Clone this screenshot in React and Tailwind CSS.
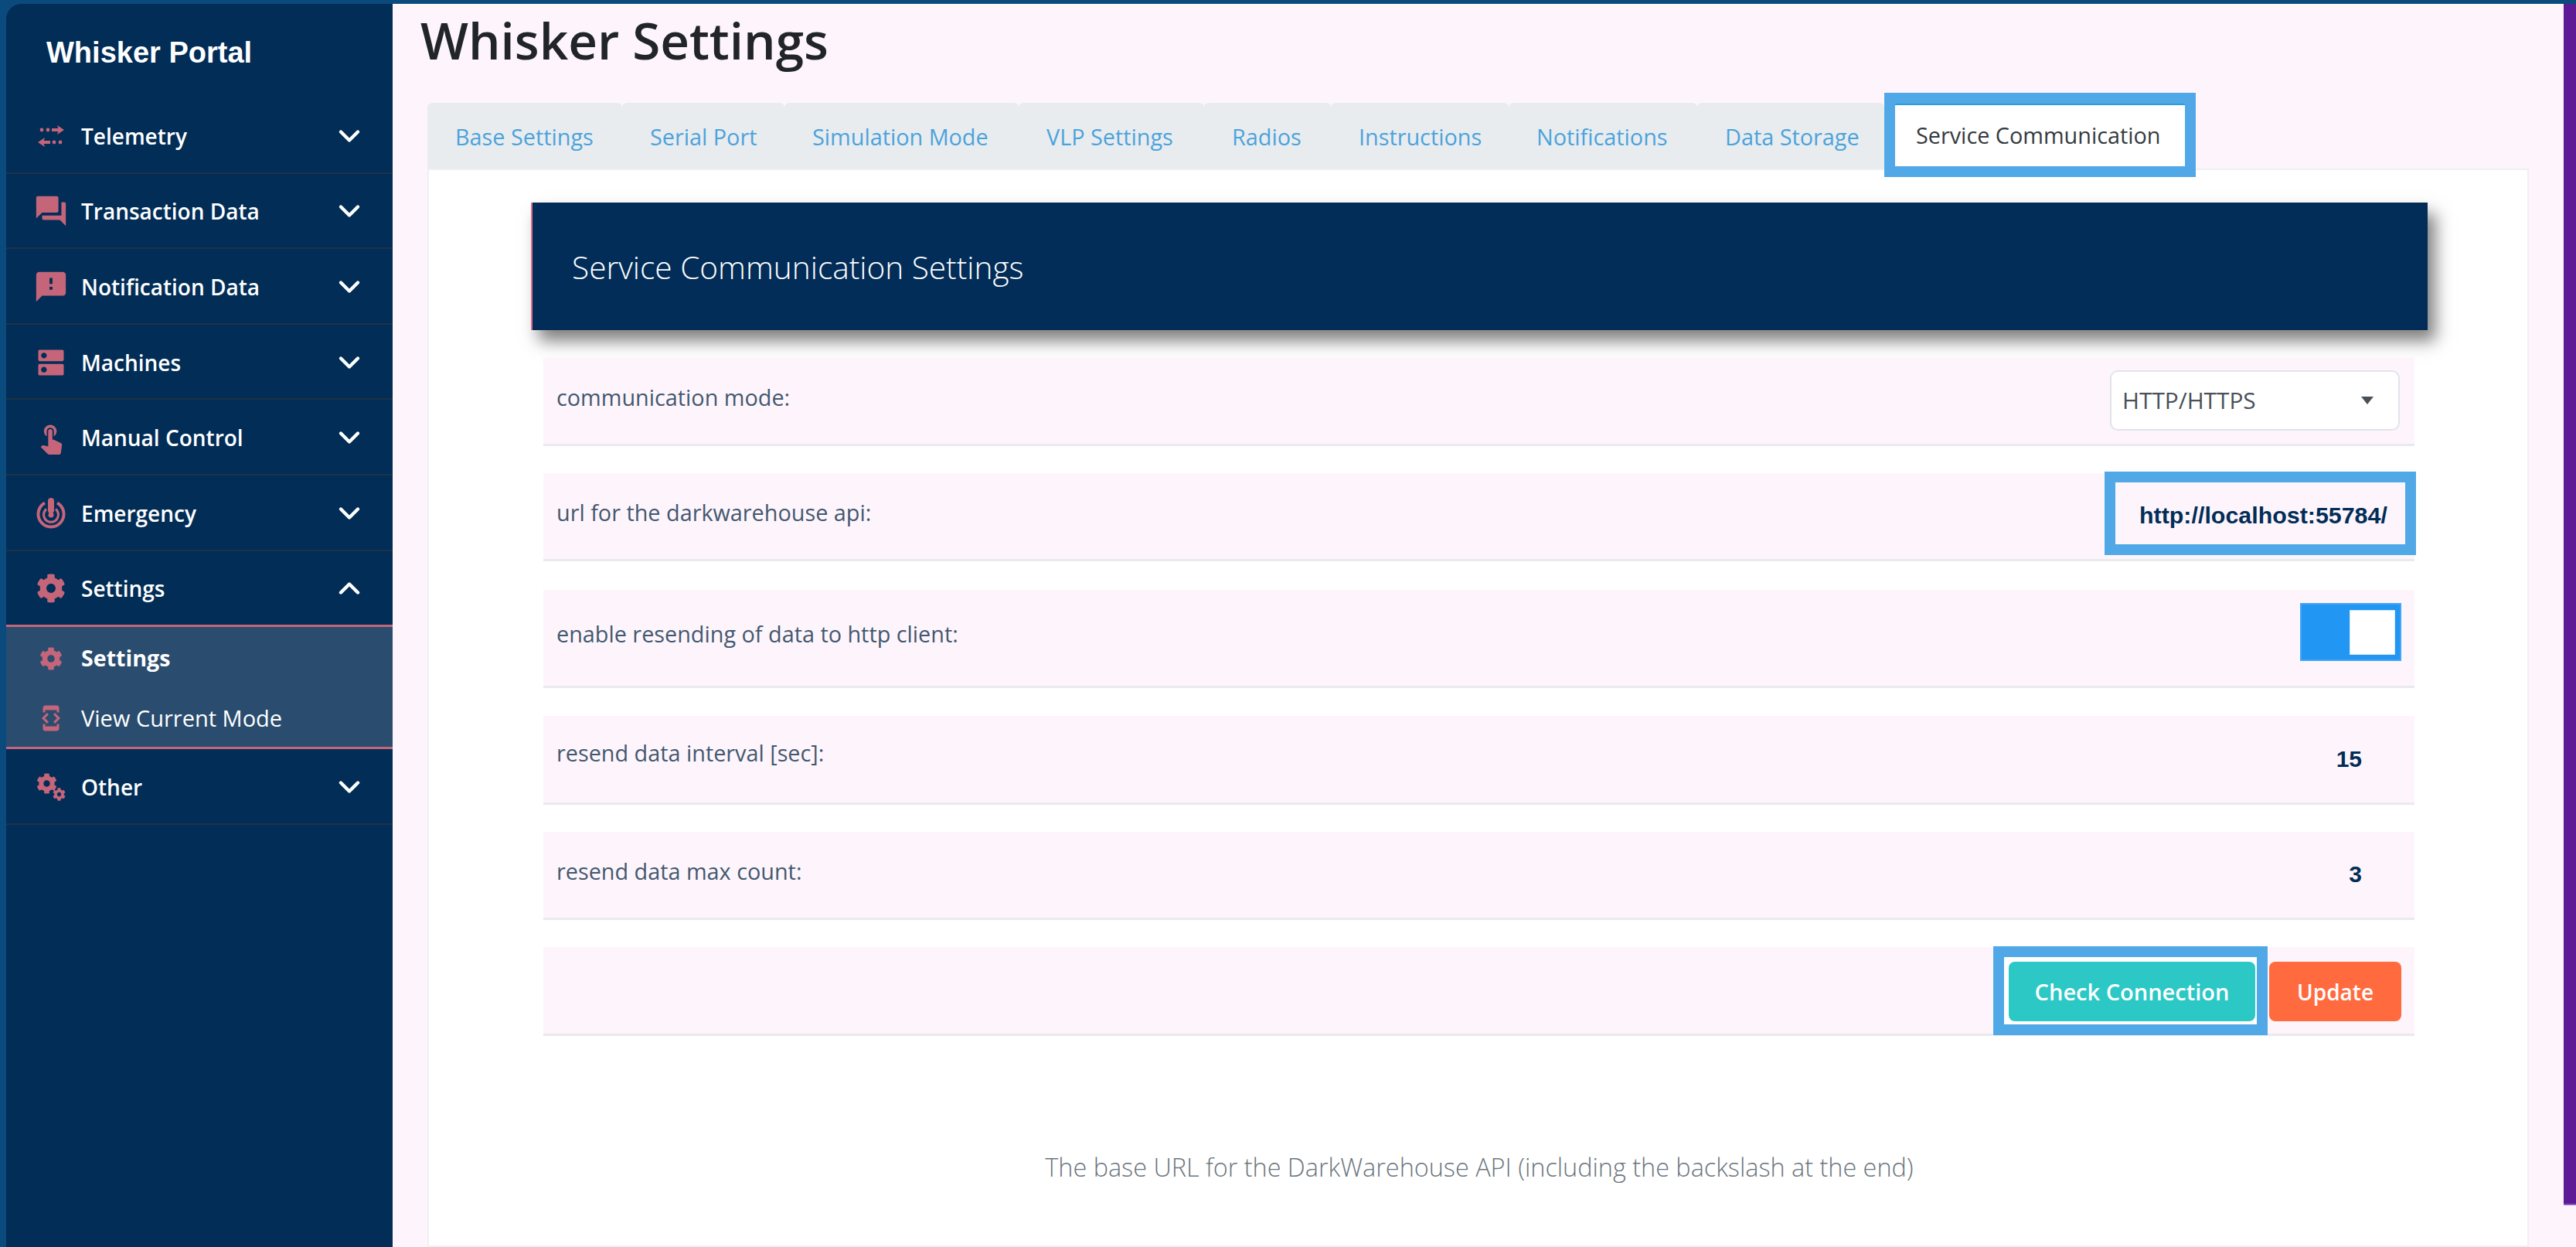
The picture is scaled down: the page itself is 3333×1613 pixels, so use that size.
import { ChevronDown, ChevronUp } from "lucide-react";
import { FaCog } from "react-icons/fa";
import { MdForum, MdFeedback, MdDns, MdTouchApp, MdDeveloperMode } from "react-icons/md";

const TelemetryIcon = () => (
  <svg width="38" height="28" viewBox="0 0 38 28" fill="#c4657a">
    <circle cx="7" cy="6" r="2.4" />
    <circle cx="15" cy="6" r="2.4" />
    <rect x="20" y="4" width="10" height="4" />
    <path d="M27 0 L36 6 L27 12 L29 6 Z" />
    <circle cx="23" cy="22" r="2.4" />
    <circle cx="31" cy="22" r="2.4" />
    <rect x="8" y="20" width="10" height="4" />
    <path d="M11 16 L2 22 L11 28 L9 22 Z" />
  </svg>
);

const EmergencyIcon = () => (
  <svg width="38" height="40" viewBox="0 0 38 40" fill="none" stroke="#c4657a">
    <path d="M11 6.5 A 16.5 16.5 0 1 0 27 6.5" strokeWidth="4" />
    <path d="M13 14.5 A 9.5 9.5 0 1 0 25 14.5" strokeWidth="3" />
    <circle cx="19" cy="22" r="3.5" fill="#c4657a" stroke="none" />
    <path d="M19 4 L19 16" strokeWidth="8" strokeLinecap="round" />
  </svg>
);

const OtherIcon = () => (
  <div className="relative w-[38px] h-[36px]">
    <FaCog size={27} color="#c4657a" className="absolute left-0 top-0" />
    <FaCog size={17} color="#c4657a" className="absolute right-0 bottom-0" />
  </div>
);

const menu = [
  { label: "Telemetry", icon: <TelemetryIcon /> },
  { label: "Transaction Data", icon: <MdForum size={46} color="#c4657a" className="shrink-0" /> },
  { label: "Notification Data", icon: <MdFeedback size={46} color="#c4657a" className="shrink-0" /> },
  { label: "Machines", icon: <MdDns size={44} color="#c4657a" className="shrink-0" /> },
  { label: "Manual Control", icon: <MdTouchApp size={44} color="#c4657a" className="shrink-0" /> },
  { label: "Emergency", icon: <EmergencyIcon /> },
];

function MenuRow({ label, icon, open }) {
  return (
    <div className="h-[97.6px] pt-[2px] flex items-center border-b-2 border-[#1e3347] text-white text-[28px] font-semibold">
      <div className="w-[38px] ml-[39px] flex items-center justify-center shrink-0">{icon}</div>
      <span className="ml-[20px]">{label}</span>
      <div className="ml-auto mr-[34px]">
        {open ? <ChevronUp size={44} strokeWidth={2.4} /> : <ChevronDown size={44} strokeWidth={2.4} />}
      </div>
    </div>
  );
}

const tabs = [
  { label: "Base Settings", cls: "w-[252px]" },
  { label: "Serial Port", cls: "w-[210px]" },
  { label: "Simulation Mode", cls: "w-[303px]" },
  { label: "VLP Settings", cls: "w-[240px]" },
  { label: "Radios", cls: "w-[164px]" },
  { label: "Instructions", cls: "w-[230px]" },
  { label: "Notifications", cls: "w-[244px]" },
  { label: "Data Storage", cls: "w-[242px]" },
];

function Row({ label, cls, labelCls, children }) {
  return (
    <div className={`flex justify-between items-start bg-[#fef5fc] border-b-[3px] border-[#e9e9ee] ${cls}`}>
      <span className={`pl-[17px] text-[28.8px] leading-[42px] text-[#43586f] ${labelCls}`}>{label}</span>
      {children}
    </div>
  );
}

export default function App() {
  return (
    <div className="w-[3333px] h-[1613px] overflow-hidden flex bg-[#0b4a7c] pt-[5px] pl-[8px] font-['Open_Sans',sans-serif]">
      {/* SIDEBAR */}
      <aside className="w-[500px] shrink-0 bg-[#012d57] rounded-tl-[20px]">
        <div className="h-[122px] pl-[52px] pt-[41px] font-['Liberation_Sans',sans-serif] font-bold text-[38px] leading-[44px] text-white">
          Whisker Portal
        </div>
        {menu.map((m) => (
          <MenuRow key={m.label} label={m.label} icon={m.icon} />
        ))}
        <MenuRow label="Settings" icon={<FaCog size={38} color="#c4657a" />} open />
        <div className="bg-[#2a4c6f] border-y-[3px] border-[#c4657a] text-white text-[29px] -mt-[2px]">
          <div className="h-[79px] pt-[2px] flex items-center font-bold">
            <div className="w-[38px] ml-[39px] flex justify-center"><FaCog size={30} color="#c4657a" /></div>
            <span className="ml-[20px] text-[28.6px]">Settings</span>
          </div>
          <div className="h-[76px] pt-[2px] flex items-center">
            <div className="w-[38px] ml-[39px] flex justify-center"><MdDeveloperMode size={36} color="#c4657a" /></div>
            <span className="ml-[20px]">View Current Mode</span>
          </div>
        </div>
        <MenuRow label="Other" icon={<OtherIcon />} />
      </aside>

      {/* MAIN */}
      <main className="flex-1 flex bg-[#fef5fc] min-w-0">
        <div className="w-[2809px] shrink-0 pl-[45px] pr-[45px]">
          <h1 className="h-[128px] -ml-[9px] pt-[4px] text-[65.5px] leading-[86px] font-semibold text-[#212529] whitespace-nowrap">
            Whisker Settings
          </h1>

          <div className="flex items-start h-[85px]">
            {tabs.map((t) => (
              <div
                key={t.label}
                className={`${t.cls} h-[85px] pl-[36px] pt-[23px] bg-[#e9ecef] rounded-t-[6px] text-[28.8px] leading-[42px] text-[#4ba3dc] whitespace-nowrap`}
              >
                {t.label}
              </div>
            ))}
            <div className="relative z-10 w-[403px] h-[109px] -mt-[13px] border-[14px] border-[#50a9e6]">
              <div className="h-full bg-white border-t-2 border-[#2a9be0] pl-[27px] pt-[18px] text-[28.8px] leading-[42px] text-[#343a40] whitespace-nowrap">
                Service Communication
              </div>
            </div>
          </div>

          <div className="h-[1395px] bg-white border-2 border-[#eef0f4] pt-[42px] pl-[132px]">
            <div className="w-[2454px] h-[165px] flex items-center pl-[51px] pt-[4px] bg-[#022d58] border-l-2 border-[#e0708a] shadow-[10px_14px_20px_rgba(0,0,0,0.5)] text-[40.6px] font-light text-white">
              Service Communication Settings
            </div>

            <div className="ml-[16px] w-[2421px]">
              <Row label="communication mode:" cls="h-[115px] mt-[35px]" labelCls="pt-[31px]">
                <div className="mt-[17px] mr-[19px] w-[375px] h-[78px] flex items-center justify-between pl-[14px] pr-[32px] bg-white border-2 border-[#e2e3ea] rounded-[10px] text-[29.8px] text-[#495057]">
                  <span>HTTP/HTTPS</span>
                  <svg width="16" height="10" viewBox="0 0 16 10"><path d="M0 0 H16 L8 10 Z" fill="#495057" /></svg>
                </div>
              </Row>
              <Row label="url for the darkwarehouse api:" cls="h-[114px] mt-[35px]" labelCls="pt-[30px]">
                <div className="-mt-[2px] -mr-[2px] w-[403px] h-[108px] border-[14px] border-[#50a9e6] pl-[31px] pt-[24px] font-['Liberation_Sans',sans-serif] font-bold text-[30.4px] leading-[36px] text-[#012d57] whitespace-nowrap">
                  http://localhost:55784/
                </div>
              </Row>
              <Row label="enable resending of data to http client:" cls="h-[127px] mt-[37px]" labelCls="pt-[36px]">
                <div className="mt-[17px] mr-[17px] w-[131px] h-[75px] flex items-center justify-end pr-[6px] bg-[#2196f3] border-2 border-[#43a5f5]">
                  <div className="w-[59px] h-[58px] bg-white border border-[#d5e8fb]" />
                </div>
              </Row>
              <Row label="resend data interval [sec]:" cls="h-[115px] mt-[36px]" labelCls="pt-[27px]">
                <span className="mt-[38px] mr-[68px] font-['Liberation_Sans',sans-serif] font-bold text-[30px] leading-[36px] text-[#012d57]">15</span>
              </Row>
              <Row label="resend data max count:" cls="h-[114px] mt-[35px]" labelCls="pt-[30px]">
                <span className="mt-[37px] mr-[68px] font-['Liberation_Sans',sans-serif] font-bold text-[30px] leading-[36px] text-[#012d57]">3</span>
              </Row>
              <div className="h-[115px] mt-[35px] flex justify-end items-start bg-[#fef5fc] border-b-[3px] border-[#e9e9ee]">
                <div className="-mt-[1px] w-[355px] h-[115px] border-[14px] border-[#50a9e6] bg-white pl-[6px] pr-[2px] pt-[6px]">
                  <button className="w-full h-[77px] bg-[#2bc8c6] rounded-[8px] text-white text-[29px] font-semibold">
                    Check Connection
                  </button>
                </div>
                <button className="mt-[19px] ml-[2px] mr-[17px] w-[171px] h-[77px] bg-[#ff6b3f] rounded-[8px] text-white text-[28px] font-semibold">
                  Update
                </button>
              </div>
            </div>

            <p className="mt-[147px] -ml-[132px] pl-[3px] text-center text-[32.4px] leading-[44px] font-light text-[#6c757d]">
              The base URL for the DarkWarehouse API (including the backslash at the end)
            </p>
          </div>
        </div>
        <div className="w-[16px] h-[1554px] bg-[#5e1a96] border-b-2 border-[#8a5cb8]" />
      </main>
    </div>
  );
}
